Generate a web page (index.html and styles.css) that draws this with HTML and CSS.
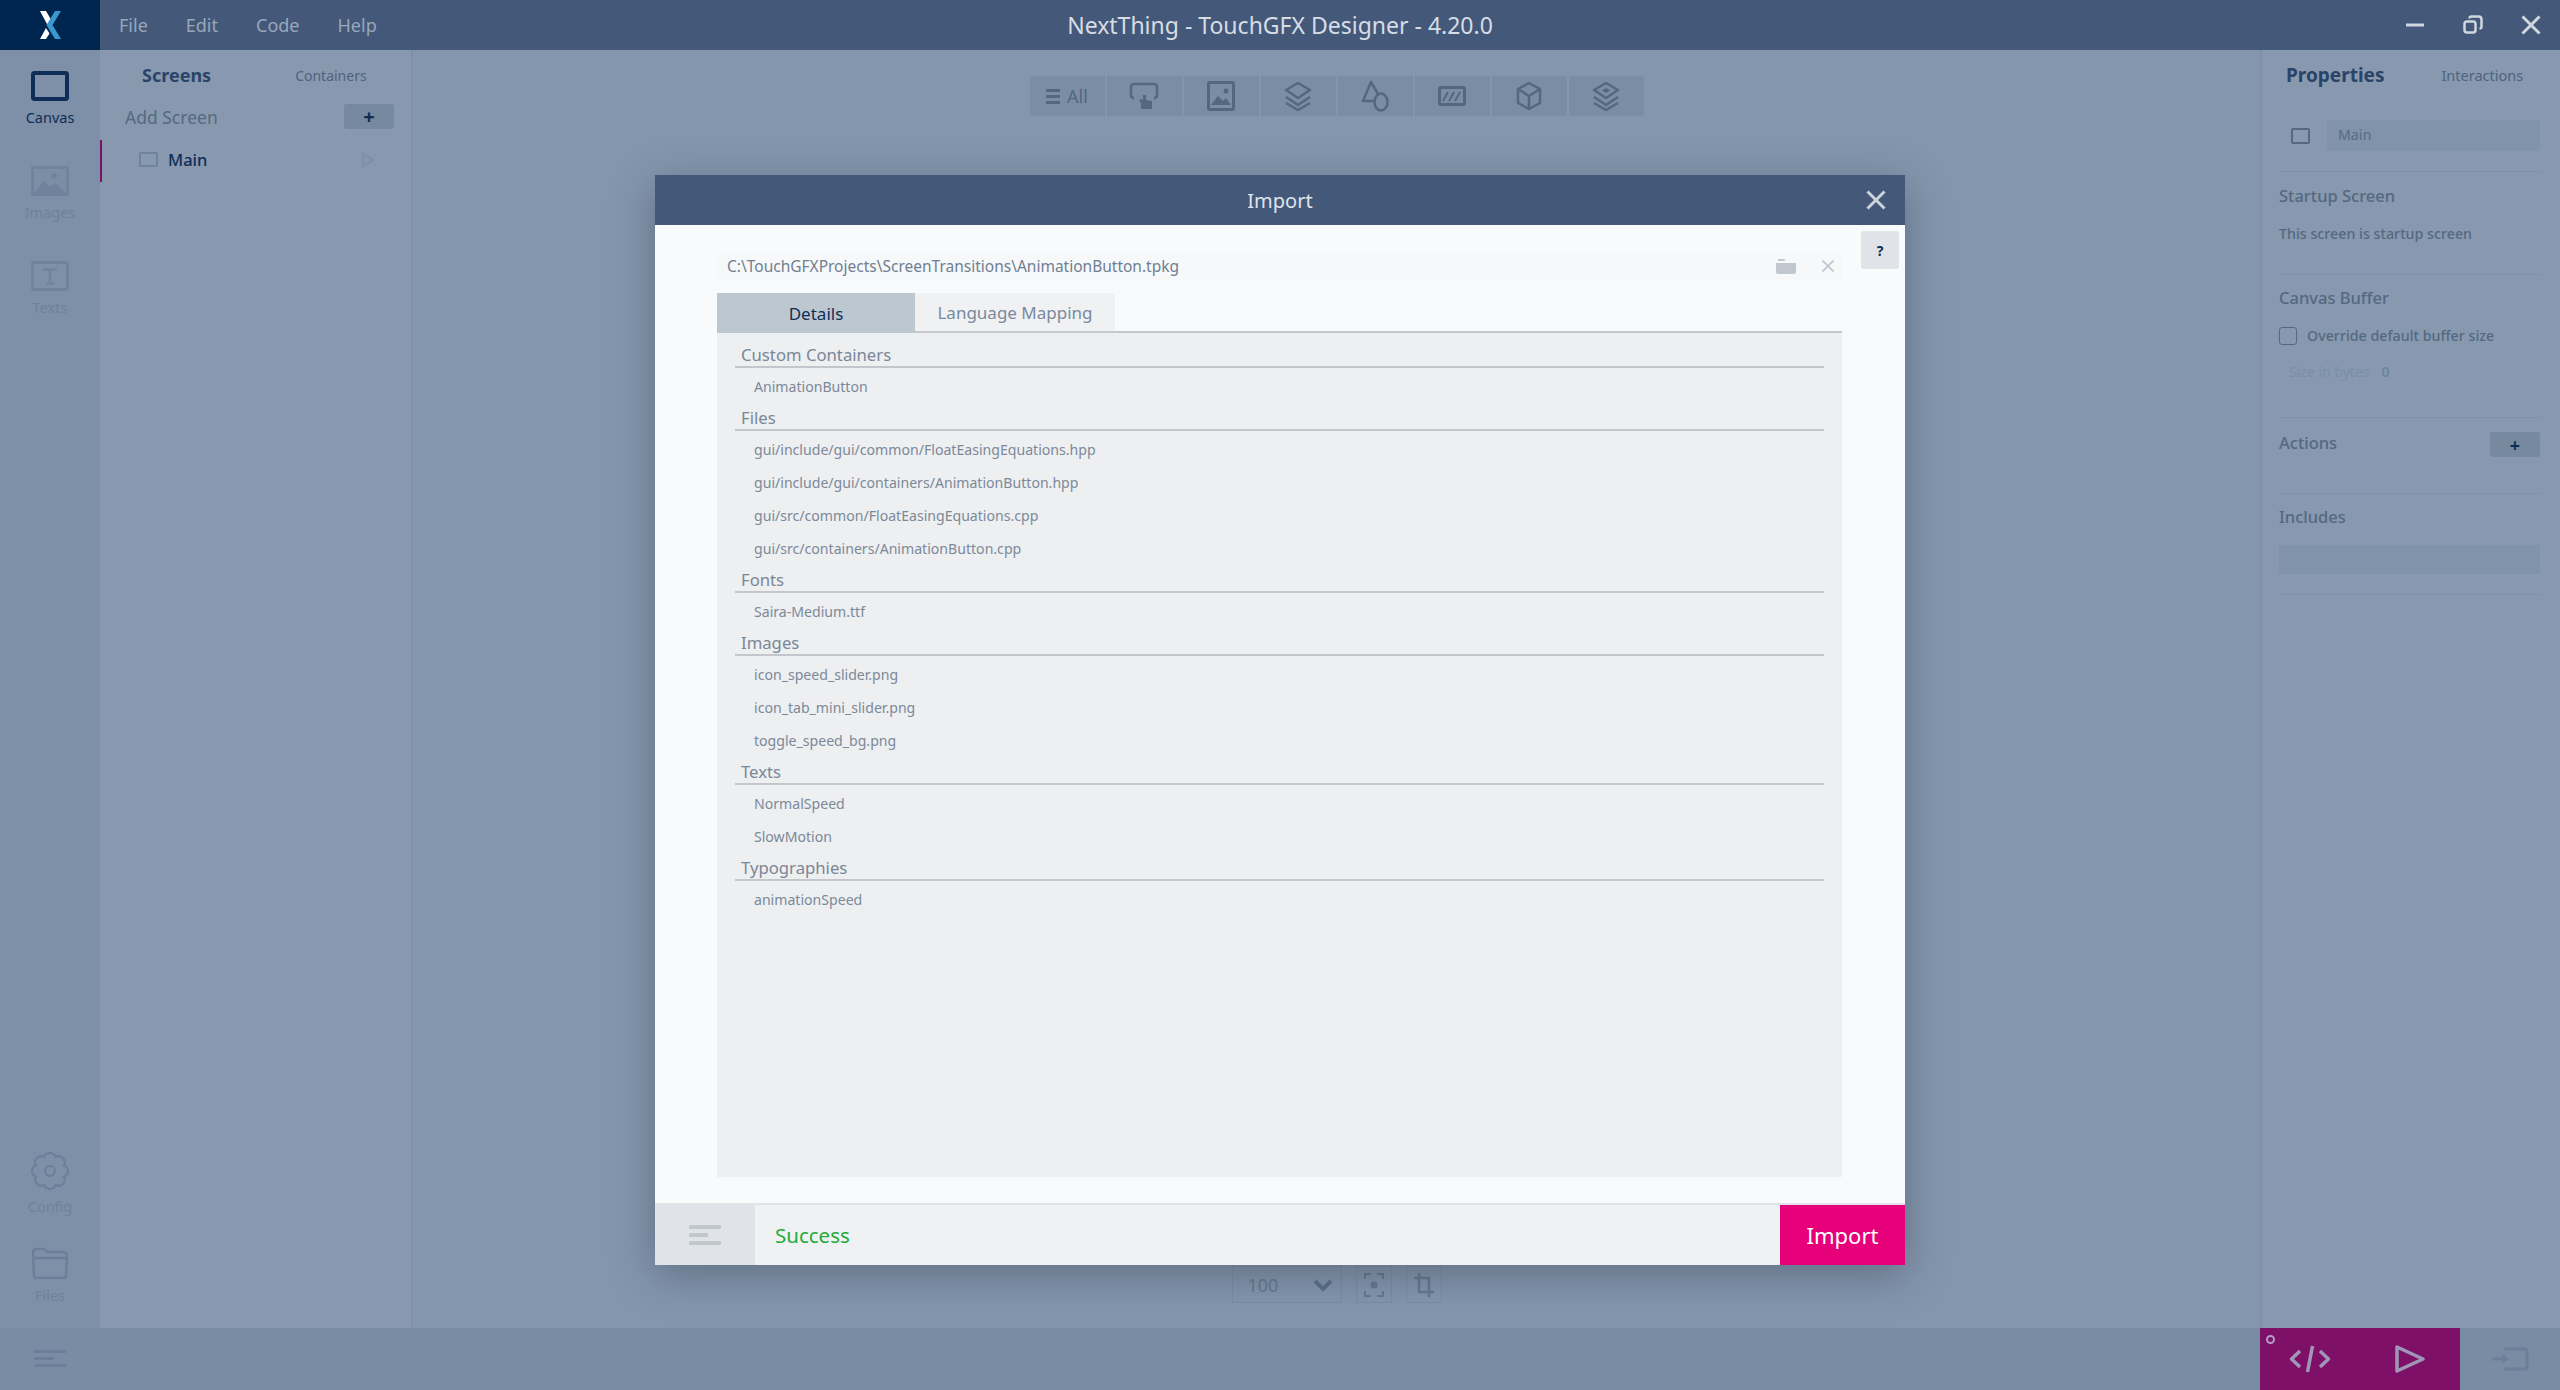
FILE: index.html
```html
<!DOCTYPE html>
<html lang="en">
<head>
    <meta charset="UTF-8">
    <title>NextThing - TouchGFX Designer - 4.20.0</title>
    <link rel="stylesheet" href="styles.css">
</head>
<body>
    <header class="titlebar">
        <div class="logo">
            <svg width="24" height="30" viewBox="0 0 24 30">
                <path d="M2 1h6l5 8.500-3.500 5.500z" fill="#fff"/>
                <path d="M2 29l6-11 3.500 5.500-3.500 5.500z" fill="#fff"/>
                <path d="M17 1h6l-8.500 14 8.500 14h-6L8.500 15z" fill="#3b97cf"/>
            </svg>
        </div>
        <nav class="menubar">
            <span>File</span>
            <span>Edit</span>
            <span>Code</span>
            <span>Help</span>
        </nav>
        <div class="app-title">NextThing - TouchGFX Designer - 4.20.0</div>
        <div class="win-controls">
            <svg width="20" height="20" viewBox="0 0 20 20"><path d="M1 10h18" stroke-width="3"/></svg>
            <svg width="20" height="20" viewBox="0 0 20 20"><rect x="1.500" y="6.500" width="11" height="11" rx="2.500" stroke-width="2.500"/><path d="M6.500 3.500q0-2 2-2h7q3 0 3 3v7q0 2-2 2" stroke-width="2.500"/></svg>
            <svg width="20" height="20" viewBox="0 0 20 20"><path d="M1.500 1.500l17 17M18.500 1.500l-17 17" stroke-width="3"/></svg>
        </div>
    </header>

    <div class="workspace">
        <aside class="rail">
            <div class="rail-top">
                <div class="rail-item active">
                    <svg width="38" height="30" viewBox="0 0 38 30"><rect x="2" y="2" width="34" height="26" rx="1.500" fill="none" stroke="#0f2e57" stroke-width="4"/></svg>
                    <span>Canvas</span>
                </div>
                <div class="rail-item">
                    <svg width="38" height="30" viewBox="0 0 38 30"><rect width="38" height="30" rx="1" fill="#6f839c"/><rect x="3" y="3" width="32" height="24" fill="#7b8ea6"/><path d="M3 27l10-12 6 6 5-4 11 10z" fill="#6f839c"/><circle cx="23" cy="10" r="3" fill="#6f839c"/></svg>
                    <span>Images</span>
                </div>
                <div class="rail-item">
                    <svg width="38" height="30" viewBox="0 0 38 30"><rect x="1.500" y="1.500" width="35" height="27" rx="1.500" fill="none" stroke="#6f839c" stroke-width="3"/><path d="M12 8.500h14M19 8.500v14M15 22.500h8" fill="none" stroke="#6f839c" stroke-width="2.500"/></svg>
                    <span>Texts</span>
                </div>
            </div>
            <div class="rail-bottom">
                <div class="rail-item">
                    <svg width="38" height="38" viewBox="0 0 38 38" fill="none" stroke="#6a7f99" stroke-width="2"><path d="M32.900 13.300A6 6 0 0 1 32.900 24.700A6 6 0 0 1 24.700 32.900A6 6 0 0 1 13.300 32.900A6 6 0 0 1 5.100 24.700A6 6 0 0 1 5.100 13.300A6 6 0 0 1 13.300 5.100A6 6 0 0 1 24.700 5.100A6 6 0 0 1 32.900 13.300z"/><circle cx="19" cy="19" r="5"/></svg>
                    <span>Config</span>
                </div>
                <div class="rail-item">
                    <svg width="38" height="32" viewBox="0 0 38 32" fill="none" stroke="#6a7f99" stroke-width="2.500"><path d="M3 29l-1-23q0-4 3-4h8l3 3h16q3 0 4 3l-1 21q0 2-3 2H6q-3 0-3-2z" stroke-linejoin="round"/><path d="M3 11h32"/></svg>
                    <span>Files</span>
                </div>
            </div>
        </aside>

        <section class="screens">
            <div class="panel-tabs">
                <span class="tab-main">Screens</span>
                <span class="tab-other">Containers</span>
            </div>
            <div class="add-row">
                <span>Add Screen</span>
                <button class="plus-btn">+</button>
            </div>
            <div class="screen-row">
                <span class="screen-box"></span>
                <span class="screen-name">Main</span>
                <svg class="screen-play" width="14" height="16" viewBox="0 0 14 16"><path d="M2 2l10 6-10 6z" fill="none" stroke="#7e91a9" stroke-width="3" stroke-linejoin="round"/></svg>
            </div>
        </section>

        <main class="canvas">
            <div class="widget-bar">
                <div class="widget-btn"><span class="all-lines"></span>All</div>
                <div class="widget-btn"><svg width="30" height="30" viewBox="0 0 30 30" fill="none" stroke="#53677f" stroke-width="2.500"><path d="M5 17q-3 0-3-3V6q0-3 3-3h20q3 0 3 3v8q0 3-3 3"/><path d="M12 28v-6l-2-3 3-1 1 2v-6h3v5l6 1v8z" fill="#53677f" stroke="none"/></svg></div>
                <div class="widget-btn"><svg width="28" height="30" viewBox="0 0 28 30"><rect x="1.500" y="1.500" width="25" height="27" rx="1.500" fill="none" stroke="#53677f" stroke-width="3"/><path d="M4 24l7-9 5 5 3-3 5 7z" fill="#53677f"/><circle cx="19" cy="10" r="2.500" fill="#53677f"/></svg></div>
                <div class="widget-btn"><svg width="28" height="30" viewBox="0 0 28 30" fill="none" stroke="#53677f" stroke-width="2.500" stroke-linejoin="round"><path d="M14 2l12 7-12 8L2 9z"/><path d="M2 16l12 8 12-8M2 22l12 7 12-7"/></svg></div>
                <div class="widget-btn"><svg width="28" height="32" viewBox="0 0 28 32" fill="none" stroke="#53677f" stroke-width="2.500" stroke-linejoin="round"><path d="M13 21H2L10 2l7 12"/><ellipse cx="20" cy="22" rx="6.500" ry="8.500"/></svg></div>
                <div class="widget-btn"><svg width="28" height="20" viewBox="0 0 28 20" fill="none" stroke="#53677f"><rect x="1.500" y="1.500" width="25" height="17" rx="1.500" stroke-width="3"/><path d="M5 15l5-9M11 15l5-9M17 15l5-9" stroke-width="2"/></svg></div>
                <div class="widget-btn"><svg width="26" height="30" viewBox="0 0 26 30" fill="none" stroke="#53677f" stroke-width="2.500" stroke-linejoin="round"><path d="M13 2l11 6v14l-11 6-11-6V8z"/><path d="M2 8l11 7 11-7M13 15v13"/></svg></div>
                <div class="widget-btn"><svg width="28" height="30" viewBox="0 0 28 30" fill="none" stroke="#53677f" stroke-width="2.500" stroke-linejoin="round"><path d="M14 2l12 7-12 8L2 9z"/><path d="M2 16l12 8 12-8M2 22l12 7 12-7"/><path d="M14 7l4 2.500-4 2.500-4-2.500z" fill="#53677f" stroke="none"/></svg></div>
            </div>
            <div class="zoom-bar">
                <div class="zoom-select">
                    <span>100</span>
                    <svg width="20" height="14" viewBox="0 0 20 14"><path d="M2 3l8 8 8-8" fill="none" stroke="#5d7089" stroke-width="4"/></svg>
                </div>
                <div class="zoom-btn"><svg width="20" height="26" viewBox="0 0 20 26" fill="none" stroke="#66798f" stroke-width="2"><path d="M1 7V2h6M13 2h6v5M1 19v5h6M13 24h6v-5"/><circle cx="10" cy="13" r="3.500" fill="#66798f" stroke="none"/></svg></div>
                <div class="zoom-btn"><svg width="22" height="26" viewBox="0 0 22 26" fill="none" stroke="#66798f" stroke-width="2.500"><path d="M6 1v19h15M1 6h15v19"/></svg></div>
            </div>
        </main>

        <aside class="props">
            <div class="panel-tabs props-tabs">
                <span class="tab-main">Properties</span>
                <span class="tab-other">Interactions</span>
            </div>
            <div class="props-name">
                <span class="name-box"></span>
                <div class="name-field">Main</div>
            </div>
            <div class="props-section startup">
                <h4>Startup Screen</h4>
                <p>This screen is startup screen</p>
            </div>
            <div class="props-section buffer">
                <h4>Canvas Buffer</h4>
                <label class="check-row"><span class="check"></span>Override default buffer size</label>
                <div class="size-row"><span>Size in bytes</span><b>0</b></div>
            </div>
            <div class="props-section actions">
                <h4>Actions</h4>
                <button class="plus-btn small">+</button>
            </div>
            <div class="props-section includes">
                <h4>Includes</h4>
                <div class="includes-field"></div>
            </div>
        </aside>
    </div>

    <footer class="statusbar">
        <div class="status-menu">
            <svg width="32" height="18" viewBox="0 0 32 18" fill="#6a7f99"><rect width="32" height="3"/><rect y="7" width="20" height="3"/><rect y="14" width="32" height="3"/></svg>
        </div>
        <div class="run-group">
            <span class="run-dot"></span>
            <svg width="42" height="28" viewBox="0 0 42 28" fill="none" stroke="#a096b8" stroke-width="3.500" stroke-linejoin="round"><path d="M11 6L2.500 14l8.500 8M31 6l8.500 8-8.500 8M23.500 1l-5 26"/></svg>
            <svg width="30" height="28" viewBox="0 0 30 28" fill="none" stroke="#a096b8" stroke-width="3.500" stroke-linejoin="round"><path d="M2 2l26 12L2 26z"/></svg>
        </div>
        <div class="exit-btn">
            <svg width="38" height="24" viewBox="0 0 38 24" fill="none" stroke="#6a7f99" stroke-width="3"><path d="M13 2h20q3 0 3 3v14q0 3-3 3H13"/><path d="M1 12h12" /><path d="M11 7l7 5-7 5z" fill="#6a7f99" stroke="none"/></svg>
        </div>
    </footer>

    <div class="overlay">
        <div class="modal">
            <div class="modal-head">
                <span>Import</span>
                <svg class="modal-close" width="20" height="20" viewBox="0 0 20 20"><path d="M1.500 1.500l17 17M18.500 1.500l-17 17" fill="none" stroke="#ccd4dc" stroke-width="3"/></svg>
            </div>
            <div class="modal-body">
                <button class="help-btn">?</button>
                <div class="path-row">
                    <span class="path-text">C:\TouchGFXProjects\ScreenTransitions\AnimationButton.tpkg</span>
                    <svg width="20" height="16" viewBox="0 0 20 16" fill="#c1c7ce"><path d="M2 3V1h6l1.500 2z"/><path d="M0 5h20v9q0 2-2 2H2q-2 0-2-2z"/></svg>
                    <svg class="path-clear" width="12" height="12" viewBox="0 0 12 12"><path d="M0.500 0.500l11 11M11.500 0.500l-11 11" stroke="#c1c7ce" stroke-width="1.800"/></svg>
                </div>
                <div class="tabs">
                    <div class="tab selected">Details</div>
                    <div class="tab">Language Mapping</div>
                </div>
                <div class="details">
                    <div class="group">
                        <h5>Custom Containers</h5>
                        <ul><li>AnimationButton</li></ul>
                    </div>
                    <div class="group">
                        <h5>Files</h5>
                        <ul>
                            <li>gui/include/gui/common/FloatEasingEquations.hpp</li>
                            <li>gui/include/gui/containers/AnimationButton.hpp</li>
                            <li>gui/src/common/FloatEasingEquations.cpp</li>
                            <li>gui/src/containers/AnimationButton.cpp</li>
                        </ul>
                    </div>
                    <div class="group">
                        <h5>Fonts</h5>
                        <ul><li>Saira-Medium.ttf</li></ul>
                    </div>
                    <div class="group">
                        <h5>Images</h5>
                        <ul>
                            <li>icon_speed_slider.png</li>
                            <li>icon_tab_mini_slider.png</li>
                            <li>toggle_speed_bg.png</li>
                        </ul>
                    </div>
                    <div class="group">
                        <h5>Texts</h5>
                        <ul>
                            <li>NormalSpeed</li>
                            <li>SlowMotion</li>
                        </ul>
                    </div>
                    <div class="group">
                        <h5>Typographies</h5>
                        <ul><li>animationSpeed</li></ul>
                    </div>
                </div>
            </div>
            <div class="modal-foot">
                <div class="foot-menu">
                    <svg width="32" height="20" viewBox="0 0 32 20" fill="#c1c7ce"><rect width="32" height="4" rx="1"/><rect y="8" width="19" height="4" rx="1"/><rect y="16" width="32" height="4" rx="1"/></svg>
                </div>
                <div class="foot-status">Success</div>
                <button class="import-btn">Import</button>
            </div>
        </div>
    </div>
</body>
</html>
```

FILE: styles.css
```css
* {
    box-sizing: border-box;
}
html, body {
    height: 100%;
}
body {
    margin: 0;
    display: flex;
    flex-direction: column;
    overflow: hidden;
    font-family: "Noto Sans", "Open Sans", sans-serif;
    background-color: #8496ad;
    color: #54687f;
}
button {
    font-family: inherit;
    border: none;
}
.titlebar {
    display: flex;
    align-items: center;
    position: relative;
    height: 50px;
    flex: none;
    background-color: #44597a;
}
.logo {
    display: flex;
    align-items: center;
    justify-content: center;
    width: 100px;
    height: 100%;
    background-color: #00264f;
}
.menubar {
    display: flex;
    gap: 38px;
    padding-left: 19px;
    font-size: 18px;
    color: #99a7bb;
}
.app-title {
    position: absolute;
    left: 0;
    right: 0;
    text-align: center;
    font-size: 23px;
    color: #d7dde5;
}
.win-controls {
    display: flex;
    gap: 38px;
    margin-left: auto;
    padding-right: 19px;
}
.win-controls svg {
    fill: none;
    stroke: #cfd7df;
}
.workspace {
    display: flex;
    flex: 1;
    min-height: 0;
}
.rail {
    display: flex;
    flex-direction: column;
    justify-content: space-between;
    width: 100px;
    flex: none;
    padding: 21px 0 23px;
    background-color: #7d90a7;
}
.rail-top {
    display: flex;
    flex-direction: column;
    gap: 39px;
}
.rail-bottom {
    display: flex;
    flex-direction: column;
    gap: 31px;
}
.rail-item {
    display: flex;
    flex-direction: column;
    align-items: center;
    gap: 6px;
    font-size: 14.500px;
    line-height: 20px;
    color: #6e8299;
}
.rail-item.active {
    color: #0f2e57;
}
.screens {
    width: 313px;
    flex: none;
    border-right: 2px solid #7f91a8;
    background-color: #8798af;
}
.panel-tabs {
    display: flex;
    align-items: center;
    height: 50px;
    padding-left: 42px;
    gap: 84px;
}
.tab-main {
    font-size: 18px;
    font-weight: 700;
    color: #2a4468;
}
.tab-other {
    font-size: 14px;
    color: #4f637e;
}
.add-row {
    display: flex;
    align-items: center;
    justify-content: space-between;
    height: 25px;
    margin: 4px 17px 11px 0;
    padding-left: 25px;
    font-size: 17.500px;
    color: #55697f;
}
.plus-btn {
    width: 50px;
    height: 25px;
    padding: 0;
    border-radius: 3px;
    background-color: #76899f;
    font-size: 20px;
    font-weight: 700;
    line-height: 22px;
    color: #0f2e57;
}
.screen-row {
    display: flex;
    align-items: center;
    height: 42px;
    padding: 0 0 3px 37px;
    border-left: 2px solid #7f1068;
}
.screen-box {
    width: 19px;
    height: 15px;
    border: 2px solid #6f839c;
    border-radius: 2px;
}
.screen-name {
    margin-left: 10px;
    font-size: 16.500px;
    font-weight: 500;
    color: #0f2e57;
}
.screen-play {
    margin-left: 154px;
}
.canvas {
    display: flex;
    flex-direction: column;
    align-items: center;
    justify-content: space-between;
    flex: 1;
    padding: 26px 0 25px;
}
.widget-bar {
    display: flex;
    gap: 2px;
    height: 40px;
    border-radius: 4px;
    overflow: hidden;
}
.widget-btn {
    display: flex;
    align-items: center;
    justify-content: center;
    gap: 7px;
    width: 75px;
    background-color: #7b8da4;
    font-size: 18px;
    color: #53677f;
}
.all-lines {
    width: 14px;
    height: 15px;
    border-top: 3px solid #53677f;
    border-bottom: 3px solid #53677f;
    background: linear-gradient(#53677f, #53677f) center / 100% 3px no-repeat;
}
.zoom-bar {
    display: flex;
    gap: 14px;
}
.zoom-select {
    display: flex;
    align-items: center;
    justify-content: space-between;
    width: 110px;
    height: 37px;
    padding: 0 8px 0 15px;
    border: 1px solid #7b8da4;
    font-size: 18px;
    color: #66798f;
}
.zoom-btn {
    display: flex;
    align-items: center;
    justify-content: center;
    width: 36px;
    height: 37px;
    border: 1px solid #7b8da4;
}
.props {
    width: 300px;
    flex: none;
    padding: 0 20px 0 17px;
    border-left: 2px solid #7f91a8;
    background-color: #8798af;
}
.props-tabs {
    padding-left: 7px;
    gap: 57px;
}
.props-tabs .tab-main {
    font-size: 19px;
}
.props-tabs .tab-other {
    font-size: 14.500px;
}
.props-name {
    display: flex;
    align-items: center;
    height: 31px;
    margin-top: 20px;
    padding-left: 12px;
}
.name-box {
    width: 19px;
    height: 16px;
    border: 2px solid #54687f;
    border-radius: 2px;
}
.name-field {
    flex: 1;
    height: 31px;
    margin-left: 17px;
    padding-left: 11px;
    background-color: #8193aa;
    border-radius: 3px;
    font-size: 14px;
    font-weight: 500;
    line-height: 30px;
    color: #5b6f88;
}
.props-section {
    border-top: 1px solid #7f91a8;
    position: relative;
}
.props-section h4 {
    margin: 0;
    font-size: 16.500px;
    font-weight: 500;
    line-height: 22px;
    color: #54687f;
}
.props-section p {
    margin: 16px 0 0;
    font-size: 14.250px;
    font-weight: 500;
    line-height: 22px;
}
.startup {
    height: 103px;
    margin-top: 20px;
    padding-top: 13px;
}
.buffer {
    height: 143px;
    padding-top: 12px;
}
.check-row {
    display: flex;
    align-items: center;
    gap: 10px;
    margin-top: 17px;
    font-size: 14.250px;
    font-weight: 500;
    line-height: 20px;
    color: #54687f;
}
.check {
    width: 18px;
    height: 18px;
    border: 1px solid #54687f;
    border-radius: 3px;
}
.size-row {
    display: flex;
    gap: 12px;
    margin-top: 16px;
    padding-left: 10px;
    font-size: 14px;
    line-height: 20px;
    color: #7b8ea5;
}
.size-row b {
    font-weight: 600;
    color: #6f839a;
}
.actions {
    display: flex;
    align-items: flex-start;
    justify-content: space-between;
    height: 76px;
    padding-top: 14px;
}
.plus-btn.small {
    width: 50px;
    height: 25px;
    font-size: 18px;
}
.includes {
    height: 102px;
    padding-top: 12px;
    border-bottom: 1px solid #7f91a8;
}
.includes-field {
    height: 29px;
    margin-top: 17px;
    background-color: #8193aa;
}
.statusbar {
    display: flex;
    align-items: center;
    height: 62px;
    flex: none;
    background-color: #7a8ca3;
}
.status-menu {
    display: flex;
    justify-content: center;
    width: 100px;
}
.run-group {
    display: flex;
    align-items: center;
    position: relative;
    gap: 64px;
    width: 200px;
    height: 100%;
    margin-left: auto;
    padding-left: 29px;
    background-color: #7f1068;
}
.run-dot {
    position: absolute;
    left: 6px;
    top: 7px;
    width: 9px;
    height: 9px;
    border: 2px solid #b39cc4;
    border-radius: 50%;
}
.exit-btn {
    display: flex;
    justify-content: center;
    width: 100px;
}
.overlay {
    position: fixed;
    top: 0;
    left: 0;
    width: 100%;
    height: 100%;
    padding-top: 175px;
}
.modal {
    display: flex;
    flex-direction: column;
    width: 1250px;
    height: 1090px;
    margin: 0 auto;
    background-color: #f9fafc;
    box-shadow: 0 10px 40px rgba(30, 40, 55, 0.35);
}
.modal-head {
    display: flex;
    align-items: center;
    justify-content: center;
    position: relative;
    height: 50px;
    flex: none;
    background-color: #44597a;
    font-size: 20px;
    color: #dfe4ea;
}
.modal-close {
    position: absolute;
    right: 19px;
    top: 15px;
}
.modal-body {
    flex: 1;
    position: relative;
    padding: 27px 63px 26px 62px;
    display: flex;
    flex-direction: column;
}
.help-btn {
    position: absolute;
    top: 6px;
    right: 6px;
    width: 38px;
    height: 38px;
    padding: 0;
    border-radius: 3px;
    background-color: #e0e3e7;
    font-size: 14px;
    font-weight: 700;
    color: #0f2e57;
}
.path-row {
    display: flex;
    align-items: center;
    height: 28px;
    padding: 0 8px 0 10px;
    background-color: #f7f8fa;
    font-size: 15.500px;
    color: #6f7f92;
}
.path-text {
    flex: 1;
}
.path-clear {
    margin-left: 26px;
}
.tabs {
    display: flex;
    height: 40px;
    margin-top: 13px;
    border-bottom: 2px solid #c3c9cf;
}
.tab {
    display: flex;
    align-items: center;
    justify-content: center;
    width: 200px;
    height: 38px;
    background-color: #eff1f3;
    font-size: 17px;
    color: #7a899d;
}
.tab.selected {
    width: 198px;
    height: 40px;
    background-color: #bdc7d0;
    color: #0f2e57;
}
.details {
    flex: 1;
    padding: 7px 18px 0;
    background-color: #edeff1;
}
.group h5 {
    height: 28px;
    margin: 0;
    padding-left: 6px;
    border-bottom: 2px solid #c3c7cc;
    font-size: 16.700px;
    font-weight: 400;
    line-height: 29px;
    color: #7a8797;
}
.group ul {
    margin: 0;
    padding: 2px 0 0 19px;
    list-style: none;
}
.group li {
    height: 33px;
    font-size: 14.100px;
    line-height: 33px;
    color: #7c8999;
}
.modal-foot {
    display: flex;
    height: 62px;
    flex: none;
    border-top: 2px solid #e0e3e8;
    background-color: #eff1f3;
}
.foot-menu {
    display: flex;
    align-items: center;
    justify-content: center;
    width: 100px;
    background-color: #e0e3e7;
}
.foot-status {
    display: flex;
    align-items: center;
    flex: 1;
    padding-left: 20px;
    font-size: 20.500px;
    color: #23ab3a;
}
.import-btn {
    width: 125px;
    padding: 0;
    background-color: #e6007a;
    font-size: 22px;
    color: #fff;
}
```
